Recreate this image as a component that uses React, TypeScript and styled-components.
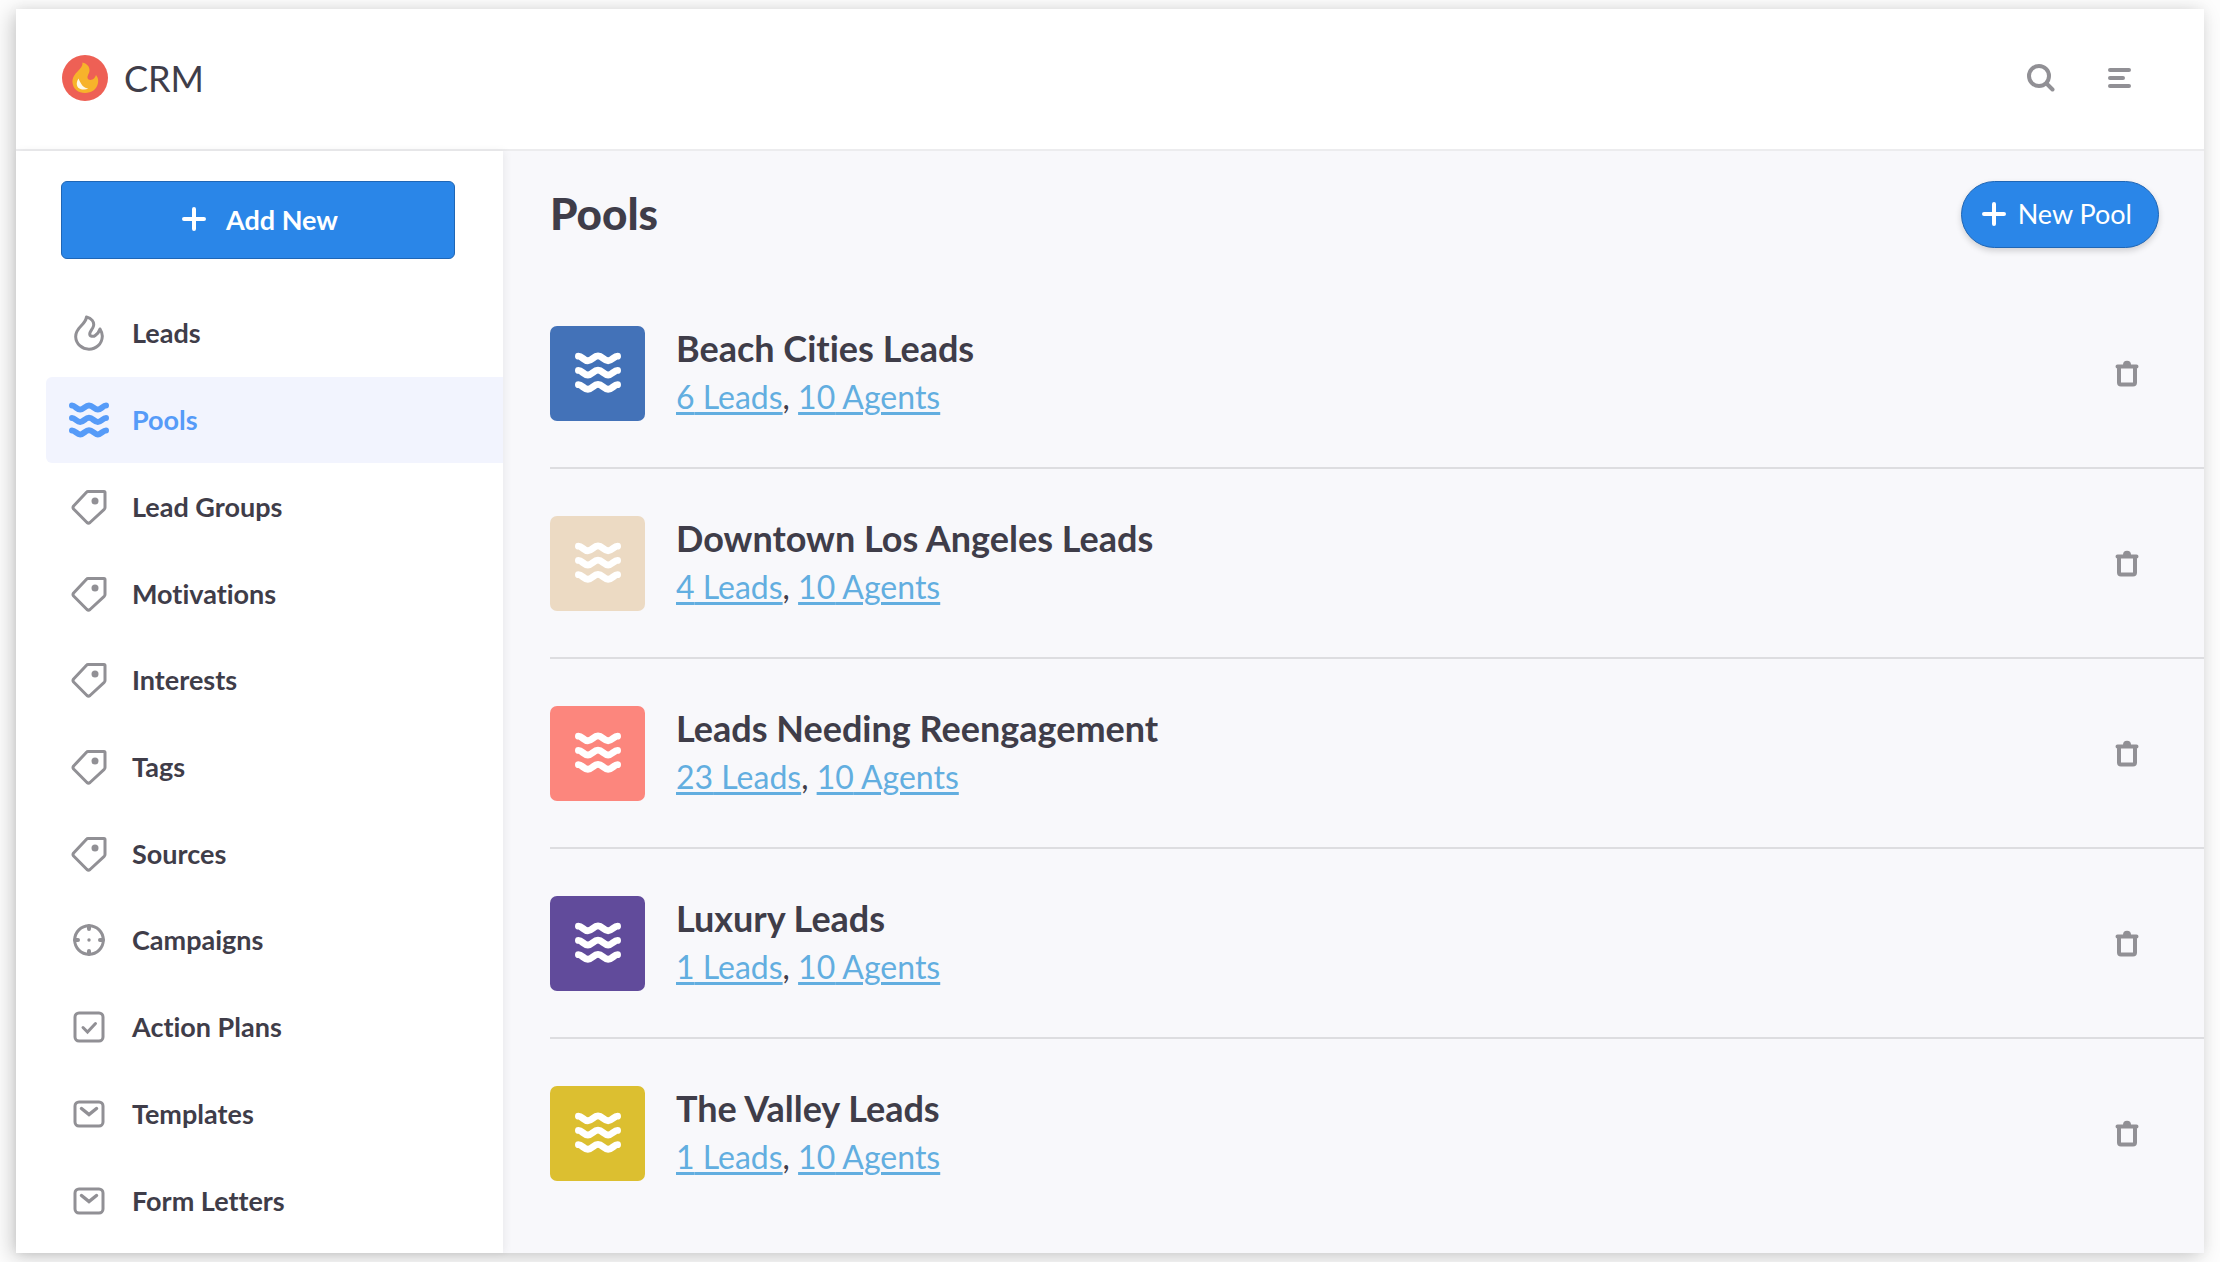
import React from "react";
import styled, { createGlobalStyle } from "styled-components";

const GlobalStyle = createGlobalStyle`
  *, *::before, *::after { box-sizing: border-box; }
  body {
    margin: 0;
    background: #fdfdfd;
    color: #3f3d49;
    font-family: Lato, "Open Sans", sans-serif;
    font-variant-ligatures: none;
    -webkit-font-smoothing: antialiased;
  }
  h1, h2, p, ul { margin: 0; padding: 0; }
  ul { list-style: none; }
  button { font: inherit; cursor: pointer; }
`;

const Page = styled.div`
  display: flex;
  min-height: 100vh;
  padding: 9px 16px;
`;

const Window = styled.div`
  flex: 1;
  display: flex;
  flex-direction: column;
  background: #fff;
  box-shadow: -4px 4px 20px rgba(0, 0, 0, 0.2), 0 0 12px rgba(0, 0, 0, 0.04);
`;

const Header = styled.header`
  display: flex;
  align-items: center;
  justify-content: space-between;
  height: 142px;
  padding: 0 62px 2px 46px;
  border-bottom: 2px solid #ececee;
`;

const Brand = styled.a`
  display: flex;
  align-items: center;
  gap: 16px;
  color: inherit;
  font-size: 36px;
  line-height: 40px;
  text-decoration: none;
`;

const HeaderActions = styled.div`
  display: flex;
  gap: 32px;
`;

const IconButton = styled.button`
  display: grid;
  place-items: center;
  width: 46px;
  height: 46px;
  padding: 0;
  border: 0;
  background: none;
  color: #919095;
`;

const Body = styled.div`
  flex: 1;
  display: flex;
`;

const Sidebar = styled.aside`
  flex: none;
  display: flex;
  flex-direction: column;
  width: 487px;
  padding: 30px 0 9px 30px;
  background: #fff;
  box-shadow: 2px 0 8px rgba(0, 0, 0, 0.06);
  z-index: 1;
`;

const AddButton = styled.button`
  display: flex;
  align-items: center;
  justify-content: center;
  gap: 20px;
  height: 78px;
  margin: 0 48px 31px 15px;
  padding: 0 0 2px 4px;
  border: 1px solid #1f66b5;
  border-radius: 6px;
  background: #2a86e8;
  color: #fff;
  font-size: 27px;
  font-weight: 700;
`;

const Nav = styled.nav`
  flex: 1;
  display: flex;
`;

const NavList = styled.ul`
  flex: 1;
  display: grid;
  grid-auto-rows: 1fr;
`;

const NavLink = styled.a<{ $active: boolean }>`
  display: flex;
  align-items: center;
  gap: 22px;
  height: 100%;
  min-height: 64px;
  padding-left: 22px;
  border-radius: 6px 0 0 6px;
  background: ${(p) => (p.$active ? "#f2f4fe" : "transparent")};
  color: ${(p) => (p.$active ? "#569bf8" : "inherit")};
  font-size: 27px;
  line-height: 32px;
  font-weight: 700;
  text-decoration: none;
`;

const NavIcon = styled.span<{ $active: boolean }>`
  display: grid;
  place-items: center;
  width: 42px;
  height: 42px;
  color: ${(p) => (p.$active ? "#569bf8" : "#919095")};
`;

const Main = styled.main`
  flex: 1;
  min-width: 0;
  padding: 30px 0 0 47px;
  background: #f8f8fb;
`;

const TitleBar = styled.div`
  display: flex;
  align-items: center;
  justify-content: space-between;
  margin-bottom: 31px;
  padding-right: 45px;
`;

const Title = styled.h1`
  padding-bottom: 4px;
  font-size: 44px;
  line-height: 56px;
  font-weight: 900;
`;

const NewPoolButton = styled.button`
  display: flex;
  align-items: center;
  gap: 12px;
  height: 67px;
  padding: 0 26px 2px 20px;
  border: 1px solid #1f66b5;
  border-radius: 34px;
  background: #2a86e8;
  box-shadow: 0 3px 6px rgba(0, 0, 0, 0.16);
  color: #fff;
  font-size: 27px;
`;

const PoolRow = styled.li`
  display: flex;
  align-items: center;
  gap: 31px;
  height: 190px;
  padding-right: 54px;
  border-bottom: 2px solid #dddde0;

  &:last-child {
    border-bottom-color: transparent;
  }
`;

const PoolTile = styled.span<{ $color: string }>`
  display: grid;
  place-items: center;
  width: 95px;
  height: 95px;
  border-radius: 7px;
  background: ${(p) => p.$color};
  color: #fff;
`;

const PoolText = styled.div`
  flex: 1;
`;

const PoolName = styled.h2`
  font-size: 36px;
  line-height: 48px;
  font-weight: 700;
`;

const PoolStats = styled.p`
  font-size: 32px;
  line-height: 50px;
`;

const StatLink = styled.a`
  color: #62aee0;
  text-decoration: underline;
  text-decoration-thickness: 3px;
  text-underline-offset: 3px;
`;

const FlameLogo = () => (
  <svg width="46" height="46" viewBox="0 0 46 46" aria-hidden="true">
    <circle cx="23" cy="23" r="23" fill="#ee6055" />
    <path
      d="M20.500 7.500c4 1 7.500 4 7 8.500-.2 2.500-2.500 4.500-2 7 .6 2.500 4.500 2.500 6.500.5 1-1 1.600-2.200 2-3.500 2 2.500 2.600 5 2 8-1.200 6.500-6.500 10-13 10s-12-4-12.500-10.500c-.4-5 2.500-8.500 5.500-11.500 2.600-2.700 4.800-5 4.500-8.500z"
      fill="#f7b32b"
    />
    <path
      d="M16.500 23.500c-3 4.500-2 9.500 2.500 10.700 2.500.7 5.200.5 7.300-.7-3.500-.3-5.500-2-7-4.500-1.200-2-2-3.500-2.800-5.500z"
      fill="#fff8e8"
    />
  </svg>
);

const PlusIcon = () => (
  <svg width="24" height="24" viewBox="0 0 24 24" fill="none" stroke="currentColor" strokeWidth="4" strokeLinecap="round" aria-hidden="true">
    <path d="M12 2v20M2 12h20" />
  </svg>
);

const SearchIcon = () => (
  <svg width="28" height="28" viewBox="0 0 28 28" fill="none" stroke="currentColor" strokeWidth="4" strokeLinecap="round" aria-hidden="true">
    <circle cx="12" cy="12" r="10" />
    <path d="M19.500 19.500l6 6" />
  </svg>
);

const MenuIcon = () => (
  <svg width="23" height="20" viewBox="0 0 23 20" fill="none" stroke="currentColor" strokeWidth="4" strokeLinecap="round" aria-hidden="true">
    <path d="M2 2h19M2 10h13M2 18h19" />
  </svg>
);

const TrashIcon = () => (
  <svg width="24" height="27" viewBox="0 0 24 27" fill="none" stroke="currentColor" strokeWidth="4" strokeLinecap="round" strokeLinejoin="round" aria-hidden="true">
    <path d="M2.500 6.500h19M4 6.500v16q0 2 2 2h12q2 0 2-2v-16" />
    <path d="M8 5a4 4.200 0 0 1 8 0z" fill="currentColor" stroke="none" />
  </svg>
);

const WavesIcon = ({ size = 40 }: { size?: number }) => (
  <svg width={size} height={(size * 36) / 40} viewBox="0 0 40 36" fill="none" stroke="currentColor" strokeWidth="6" strokeLinecap="round" strokeLinejoin="round" aria-hidden="true">
    {[3.6, 16, 28.4].map((y) => (
      <path
        key={y}
        d={`M3 ${y}c1.500 0 2.500.8 4 2c1.600 1.300 2.600 2 4.200 2s2.700-.8 4.300-2.100c1.700-1.400 2.800-2.100 4.500-2.100s2.800.7 4.500 2.100c1.600 1.300 2.700 2.100 4.300 2.100s2.600-.7 4.200-2c1.500-1.200 2.500-2 4-2`}
      />
    ))}
  </svg>
);

const FlameIcon = () => (
  <svg width="30" height="36" viewBox="0 0 30 36" fill="none" stroke="currentColor" strokeWidth="3" strokeLinejoin="round" aria-hidden="true">
    <path d="M12.500 2c5 1 8 5 7 9-.7 3-3.800 5.500-3.800 8 0 2.500 3.500 3 5.500 1.500 2.500-1.800 4-4 4.800-6.500 1.500 2.500 2.500 5 2.300 7.500C28 29 22 34.200 15 34.200S2 29 1.700 22C1.500 17 4 14 7 11c3-3 5-5 5.500-9z" />
  </svg>
);

const TagIcon = () => (
  <svg width="36" height="36" viewBox="0 0 36 36" fill="none" stroke="currentColor" strokeWidth="3" strokeLinejoin="round" aria-hidden="true">
    <path d="M17 2.500h16q1 0 1 1v15q0 1-.8 1.800L19 33.500q-1.500 1.200-3 0L2.600 20q-1.200-1.500 0-3L15.500 3.300q.6-.8 1.500-.8z" />
    <circle cx="24" cy="12" r="3.500" fill="currentColor" stroke="none" />
  </svg>
);

const TargetIcon = () => (
  <svg width="32" height="32" viewBox="0 0 32 32" fill="none" stroke="currentColor" strokeWidth="3" aria-hidden="true">
    <circle cx="16" cy="16" r="14.300" />
    <path d="M16 2v3M16 27v3M2 16h3M27 16h3" strokeWidth="4" strokeLinecap="round" />
    <circle cx="16" cy="16" r="1.700" fill="currentColor" stroke="none" />
  </svg>
);

const CheckIcon = () => (
  <svg width="32" height="32" viewBox="0 0 32 32" fill="none" stroke="currentColor" strokeWidth="3" strokeLinecap="round" aria-hidden="true">
    <rect x="2" y="2" width="28" height="28" rx="4" />
    <path d="M10 16.500l4.500 4.500 8-8.500" />
  </svg>
);

const MailIcon = () => (
  <svg width="32" height="28" viewBox="0 0 32 28" fill="none" stroke="currentColor" strokeWidth="3" strokeLinecap="round" aria-hidden="true">
    <rect x="2" y="2" width="28" height="24" rx="4" />
    <path d="M8.500 8.500l7.500 6 7.500-6" strokeWidth="3.500" />
  </svg>
);

const navItems: { label: string; Icon: React.ComponentType; active?: boolean }[] = [
  { label: "Leads", Icon: FlameIcon },
  { label: "Pools", Icon: WavesIcon, active: true },
  { label: "Lead Groups", Icon: TagIcon },
  { label: "Motivations", Icon: TagIcon },
  { label: "Interests", Icon: TagIcon },
  { label: "Tags", Icon: TagIcon },
  { label: "Sources", Icon: TagIcon },
  { label: "Campaigns", Icon: TargetIcon },
  { label: "Action Plans", Icon: CheckIcon },
  { label: "Templates", Icon: MailIcon },
  { label: "Form Letters", Icon: MailIcon },
];

const pools = [
  { name: "Beach Cities Leads", leads: 6, agents: 10, color: "#4372b8" },
  { name: "Downtown Los Angeles Leads", leads: 4, agents: 10, color: "#ecdac3" },
  { name: "Leads Needing Reengagement", leads: 23, agents: 10, color: "#fc867d" },
  { name: "Luxury Leads", leads: 1, agents: 10, color: "#614b9b" },
  { name: "The Valley Leads", leads: 1, agents: 10, color: "#dcbf30" },
];

export default function App() {
  return (
    <>
      <GlobalStyle />
      <Page>
        <Window>
          <Header>
            <Brand href="#">
              <FlameLogo />
              CRM
            </Brand>
            <HeaderActions>
              <IconButton aria-label="Search">
                <SearchIcon />
              </IconButton>
              <IconButton aria-label="Menu">
                <MenuIcon />
              </IconButton>
            </HeaderActions>
          </Header>
          <Body>
            <Sidebar>
              <AddButton>
                <PlusIcon />
                Add New
              </AddButton>
              <Nav aria-label="CRM">
                <NavList>
                  {navItems.map(({ label, Icon, active = false }) => (
                    <li key={label}>
                      <NavLink href="#" $active={active} aria-current={active ? "page" : undefined}>
                        <NavIcon $active={active}>
                          <Icon />
                        </NavIcon>
                        {label}
                      </NavLink>
                    </li>
                  ))}
                </NavList>
              </Nav>
            </Sidebar>
            <Main>
              <TitleBar>
                <Title>Pools</Title>
                <NewPoolButton>
                  <PlusIcon />
                  New Pool
                </NewPoolButton>
              </TitleBar>
              <ul>
                {pools.map((pool) => (
                  <PoolRow key={pool.name}>
                    <PoolTile $color={pool.color}>
                      <WavesIcon size={46} />
                    </PoolTile>
                    <PoolText>
                      <PoolName>{pool.name}</PoolName>
                      <PoolStats>
                        <StatLink href="#">{pool.leads} Leads</StatLink>,{" "}
                        <StatLink href="#">{pool.agents} Agents</StatLink>
                      </PoolStats>
                    </PoolText>
                    <IconButton aria-label={`Delete ${pool.name}`}>
                      <TrashIcon />
                    </IconButton>
                  </PoolRow>
                ))}
              </ul>
            </Main>
          </Body>
        </Window>
      </Page>
    </>
  );
}
